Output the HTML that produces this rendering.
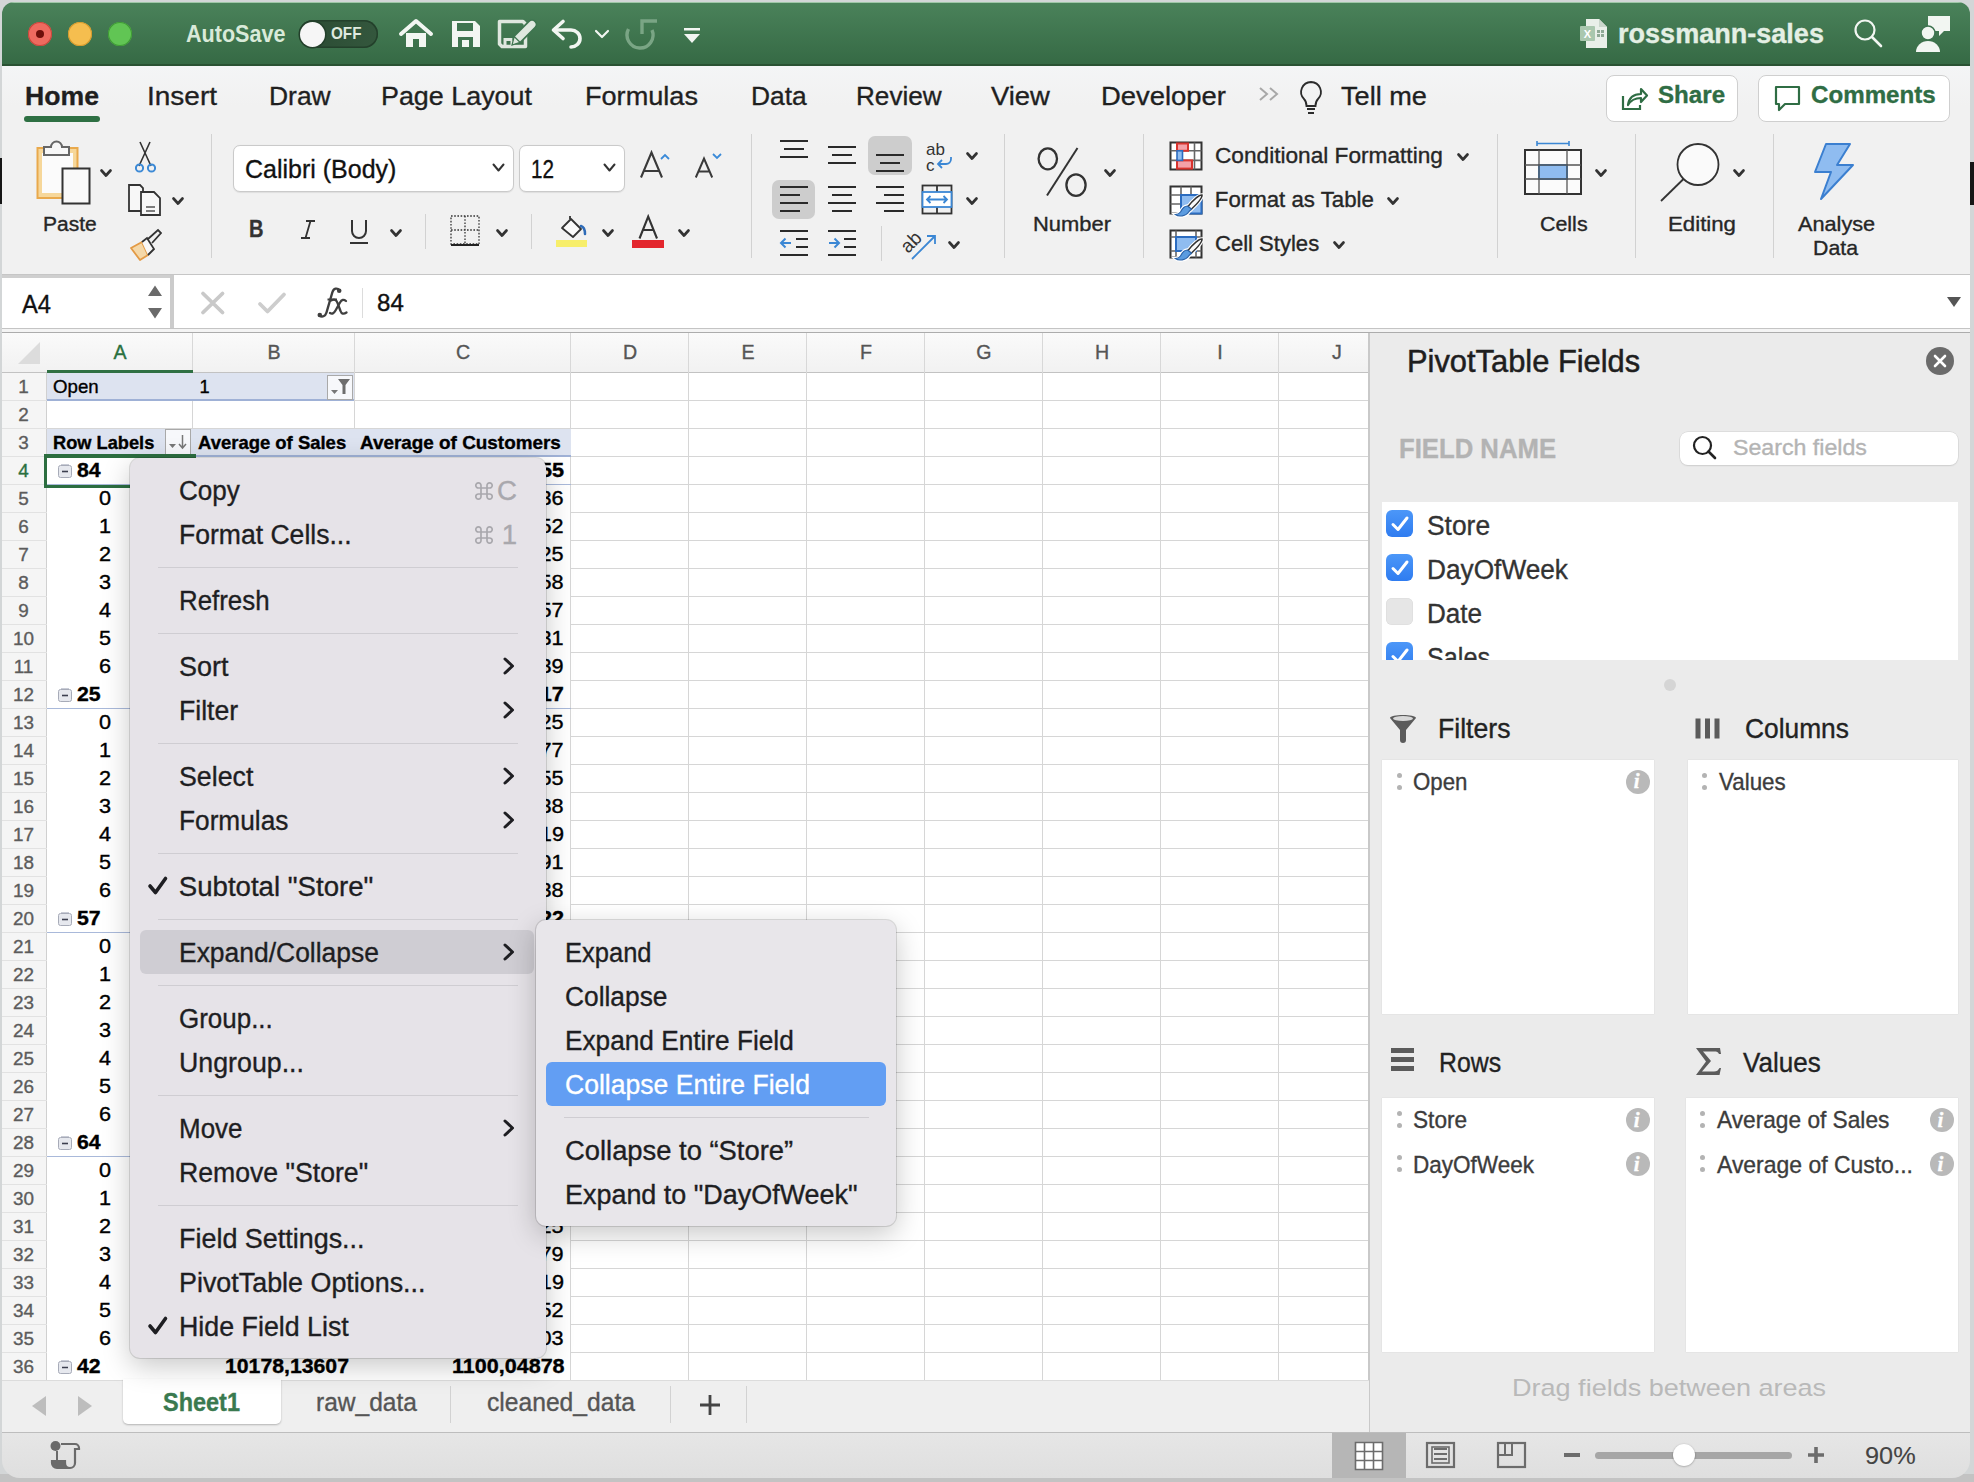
<!DOCTYPE html>
<html><head><meta charset="utf-8"><title>Excel</title><style>*{margin:0;padding:0;box-sizing:border-box}
html,body{width:1974px;height:1482px;overflow:hidden;background:#d3d6d7;font-family:"Liberation Sans",sans-serif}
.a{position:absolute}
.t{position:absolute;white-space:pre;line-height:1;transform-origin:0 0;-webkit-text-stroke:0.35px currentColor}
svg{overflow:visible}
</style></head><body>
<div class="a" style="left:0px;top:0px;width:1974px;height:1482px;background:#d3d6d7;"></div>
<div class="a" style="left:0px;top:1474px;width:1974px;height:8px;background:#c3c3c3;"></div>
<div class="a" style="left:0px;top:158px;width:3px;height:46px;background:#161616;"></div>
<div class="a" style="left:1968px;top:162px;width:6px;height:43px;background:#161616;"></div>
<div id="win" class="a" style="left:0;top:0;width:1974px;height:1482px;clip-path:inset(2px 4px 4px 2px round 12px 12px 18px 18px);">
<div class="a" style="left:0px;top:0px;width:1974px;height:66px;background:linear-gradient(#4b835b,#356944);"></div>
<div class="a" style="left:0px;top:2px;width:1974px;height:1px;background:#9fc7a8;"></div>
<div class="a" style="left:0px;top:64px;width:1974px;height:2px;background:#2a5233;"></div>
<div class="a" style="left:28px;top:22px;width:24px;height:24px;border-radius:50%;background:#ee6a5f;box-shadow:inset 0 0 0 1px #c9453b"></div>
<div class="a" style="left:68px;top:22px;width:24px;height:24px;border-radius:50%;background:#f5be4f;box-shadow:inset 0 0 0 1px #d69a2c"></div>
<div class="a" style="left:108px;top:22px;width:24px;height:24px;border-radius:50%;background:#61c554;box-shadow:inset 0 0 0 1px #3f9b35"></div>
<div class="a" style="left:36px;top:30px;width:8px;height:8px;border-radius:50%;background:#6e0f0a"></div>
<div class="t" style="left:186.00px;top:22.81px;font-size:23.26px;color:#d9ead9;font-weight:bold;transform:scaleX(0.9276);-webkit-text-stroke:0;">AutoSave</div>
<div class="a" style="left:299px;top:20px;width:79px;height:28px;border-radius:14px;background:linear-gradient(90deg,#2a4b33,#34573d);box-shadow:inset 0 0 0 1.5px #23402b"></div>
<div class="a" style="left:299.5px;top:21.5px;width:25px;height:25px;border-radius:50%;background:#f6f6f6;box-shadow:0 0 0 1.5px #23402b"></div>
<div class="t" style="left:330.50px;top:25.55px;font-size:16.72px;color:#dfeadf;font-weight:bold;transform:scaleX(0.9123);-webkit-text-stroke:0;">OFF</div>
<svg class="a" style="left:398px;top:18px;" width="36" height="32" viewBox="0 0 36 32"><path d="M3 16 L18 3 L33 16" fill="none" stroke="#f2f6f2" stroke-width="4" stroke-linejoin="round" stroke-linecap="round"/><path d="M8 15 V29 H15 V21 H21 V29 H28 V15" fill="#f2f6f2"/></svg>
<svg class="a" style="left:450px;top:19px;" width="32" height="30" viewBox="0 0 32 30"><path d="M2 2 H25 L30 7 V28 H2 Z" fill="#f2f6f2"/><rect x="7" y="4" width="16" height="8" fill="#3f7550"/><rect x="8" y="18" width="15" height="10" fill="#3f7550"/><rect x="12" y="21" width="7" height="7" fill="#f2f6f2"/></svg>
<svg class="a" style="left:496px;top:18px;" width="40" height="32" viewBox="0 0 40 32"><path d="M3.5 3.5 H27 L29.5 6 V28.5 H6 L3.5 26 Z" fill="none" stroke="#dfe7df" stroke-width="3.5" stroke-linejoin="round"/><path d="M9 29 V21.5 H16 V29" fill="none" stroke="#dfe7df" stroke-width="3"/><path d="M36 6.5 L21.5 21" stroke="#3f7550" stroke-width="10.5" stroke-linecap="round"/><path d="M36 6.5 L21.5 21" stroke="#dfe7df" stroke-width="7" stroke-linecap="round"/><path d="M18.2 18.5 L24 24.3 L16 27 Z" fill="#dfe7df" stroke="#3f7550" stroke-width="1.2"/></svg>
<svg class="a" style="left:550px;top:18px;" width="34" height="32" viewBox="0 0 34 32"><path d="M13 3.5 L3.5 12 L13 20.5" fill="none" stroke="#f2f6f2" stroke-width="3.6" stroke-linecap="round" stroke-linejoin="round"/><path d="M5 12 H21 A9 8.5 0 0 1 21 29" fill="none" stroke="#f2f6f2" stroke-width="3.6" stroke-linecap="round"/></svg>
<svg class="a" style="left:594px;top:29px;" width="16" height="11" viewBox="0 0 16 11"><path d="M2 2 L8 8 L14 2" fill="none" stroke="#f2f6f2" stroke-width="2.2" stroke-linecap="round" stroke-linejoin="round"/></svg>
<svg class="a" style="left:624px;top:17px;" width="36" height="33" viewBox="0 0 36 33"><path d="M4.5 12 A13 13 0 1 0 28 13" fill="none" stroke="#7aa585" stroke-width="3.4"/><path d="M18 17 V4 H33" fill="none" stroke="#7aa585" stroke-width="3.4" stroke-linejoin="miter"/></svg>
<svg class="a" style="left:682px;top:27px;" width="20" height="18" viewBox="0 0 20 18"><rect x="2" y="1" width="16" height="2.5" fill="#f2f6f2"/><path d="M2 7 H18 L10 16 Z" fill="#f2f6f2"/></svg>
<svg class="a" style="left:1579px;top:17px;" width="30" height="33" viewBox="0 0 30 33"><path d="M7 2 H20 L28 10 V31 H7 Z" fill="#e9efe9"/><path d="M20 2 V10 H28" fill="#c9d6cb"/><rect x="1" y="9" width="15" height="15" rx="1" fill="#a9c7ae"/><text x="8.5" y="21" font-size="11" font-family="Liberation Sans" font-weight="bold" fill="#fff" text-anchor="middle">X</text><rect x="18" y="13" width="3" height="3" fill="#8fa995"/><rect x="22" y="13" width="3" height="3" fill="#8fa995"/><rect x="18" y="17" width="3" height="3" fill="#8fa995"/><rect x="22" y="17" width="3" height="3" fill="#8fa995"/></svg>
<div class="t" style="left:1618.00px;top:20.32px;font-size:27.62px;color:#e4efe4;font-weight:bold;transform:scaleX(0.9796);">rossmann-sales</div>
<svg class="a" style="left:1850px;top:15px;" width="36" height="36" viewBox="0 0 36 36"><circle cx="15" cy="15" r="9.5" fill="none" stroke="#f2f6f2" stroke-width="2.2"/><path d="M22 22 L31 31" stroke="#f2f6f2" stroke-width="2.6" stroke-linecap="round"/></svg>
<svg class="a" style="left:1914px;top:14px;" width="38" height="40" viewBox="0 0 38 40"><path d="M14 2 H36 V17 H30 L25 22 V17 H14 Z" fill="#f2f6f2"/><circle cx="14" cy="19" r="7" fill="#f2f6f2" stroke="#3e7350" stroke-width="1.6"/><path d="M2 38 A12 11 0 0 1 26 38 Z" fill="#f2f6f2"/></svg>
<div class="a" style="left:0px;top:66px;width:1974px;height:209px;background:linear-gradient(#f4f5f6,#f1f1f1 40px,#f1f1f1);"></div>
<div class="a" style="left:0px;top:274px;width:1974px;height:1px;background:#c6c6c6;"></div>
<div class="t" style="left:25.00px;top:83.20px;font-size:26.45px;color:#1f1f1f;font-weight:bold;transform:scaleX(1.0072);">Home</div>
<div class="t" style="left:147.00px;top:83.20px;font-size:26.45px;color:#1f1f1f;transform:scaleX(1.0585);">Insert</div>
<div class="t" style="left:269.00px;top:83.20px;font-size:26.45px;color:#1f1f1f;">Draw</div>
<div class="t" style="left:381.00px;top:83.20px;font-size:26.45px;color:#1f1f1f;transform:scaleX(1.0166);">Page Layout</div>
<div class="t" style="left:585.00px;top:83.20px;font-size:26.45px;color:#1f1f1f;transform:scaleX(1.0250);">Formulas</div>
<div class="t" style="left:751.00px;top:83.20px;font-size:26.45px;color:#1f1f1f;transform:scaleX(0.9967);">Data</div>
<div class="t" style="left:855.70px;top:83.20px;font-size:26.45px;color:#1f1f1f;transform:scaleX(0.9881);">Review</div>
<div class="t" style="left:991.00px;top:83.20px;font-size:26.45px;color:#1f1f1f;transform:scaleX(1.0362);">View</div>
<div class="t" style="left:1101.00px;top:83.20px;font-size:26.45px;color:#1f1f1f;transform:scaleX(1.0368);">Developer</div>
<div class="t" style="left:1341.00px;top:83.20px;font-size:26.45px;color:#1f1f1f;transform:scaleX(1.0264);">Tell me</div>
<div class="a" style="left:24px;top:116px;width:76px;height:6px;background:#2e7043;border-radius:3px;"></div>
<svg class="a" style="left:1257px;top:86px;" width="26" height="18" viewBox="0 0 26 18"><path d="M3 2 L10 8 L3 14 M13 2 L20 8 L13 14" fill="none" stroke="#a8a8a8" stroke-width="2"/></svg>
<svg class="a" style="left:1298px;top:80px;" width="26" height="36" viewBox="0 0 26 36"><path d="M13 2 A10 10 0 0 1 20 19 C18 21 17.5 23 17.5 26 H8.5 C8.5 23 8 21 6 19 A10 10 0 0 1 13 2 Z" fill="none" stroke="#2b2b2b" stroke-width="1.8"/><path d="M9 29 H17 M10 33 H16" stroke="#2b2b2b" stroke-width="1.8"/></svg>
<div class="a" style="left:1605.5px;top:74.5px;width:132px;height:47px;border:1px solid #cfcfcf;border-radius:8px;background:#fff"></div>
<div class="a" style="left:1758px;top:74.5px;width:192px;height:47px;border:1px solid #cfcfcf;border-radius:8px;background:#fff"></div>
<svg class="a" style="left:1621px;top:84px;" width="28" height="28" viewBox="0 0 28 28"><path d="M2 12 V25 H19 V21" fill="none" stroke="#2f6d44" stroke-width="2.2"/><path d="M7 21 C8 13 13 10 20 10 V5 L26 11.5 L20 18 V14 C14 14 10 16 7 21 Z" fill="none" stroke="#2f6d44" stroke-width="2.2" stroke-linejoin="round"/></svg>
<div class="t" style="left:1657.50px;top:83.08px;font-size:24.71px;color:#2f6d44;font-weight:bold;transform:scaleX(0.9768);">Share</div>
<svg class="a" style="left:1774px;top:84px;" width="28" height="28" viewBox="0 0 28 28"><path d="M2 3 H25 V20 H11 L5 26 V20 H2 Z" fill="none" stroke="#2f6d44" stroke-width="2.2" stroke-linejoin="round"/></svg>
<div class="t" style="left:1810.60px;top:83.08px;font-size:24.71px;color:#2f6d44;font-weight:bold;transform:scaleX(0.9774);">Comments</div>
<svg class="a" style="left:34px;top:142px;" width="60" height="64" viewBox="0 0 60 64"><rect x="3.5" y="6" width="40" height="50" fill="#f6d79a" stroke="#e9a94c" stroke-width="2"/><rect x="8" y="11" width="31" height="40" fill="#fbfbfb"/><path d="M10 13 H35 V5 H28 A5 5 0 0 0 17 5 H10 Z" fill="#f7f7f7" stroke="#666" stroke-width="2"/><rect x="28.5" y="26.5" width="27" height="35" fill="#f9f9f9" stroke="#333" stroke-width="2"/></svg>
<svg class="a" style="left:100px;top:169px;" width="12" height="8" viewBox="0 0 12 8"><path d="M1.5 1.5 L6.0 6.5 L10.5 1.5" fill="none" stroke="#333" stroke-width="2.7" stroke-linecap="round" stroke-linejoin="round"/></svg>
<div class="t" style="left:43.00px;top:214.27px;font-size:20.35px;color:#262626;transform:scaleX(1.0319);">Paste</div>
<svg class="a" style="left:132px;top:140px;" width="26" height="34" viewBox="0 0 26 34"><path d="M8 2 L19 26 M18 2 L7 26" stroke="#333" stroke-width="1.6"/><circle cx="7.5" cy="28" r="3.6" fill="none" stroke="#3d8ad6" stroke-width="2"/><circle cx="19.5" cy="28" r="3.6" fill="none" stroke="#3d8ad6" stroke-width="2"/></svg>
<svg class="a" style="left:127px;top:183px;" width="36" height="34" viewBox="0 0 36 34"><path d="M2 2 H13 L16 5 V28 H2 Z" fill="#f7f7f7" stroke="#333" stroke-width="1.8"/><path d="M14 9 H27 L33 15 V32 H14 Z" fill="#f7f7f7" stroke="#333" stroke-width="1.8"/><path d="M19 24 H28 M19 28 H28" stroke="#555" stroke-width="1.6"/></svg>
<svg class="a" style="left:172px;top:197px;" width="12" height="8" viewBox="0 0 12 8"><path d="M1.5 1.5 L6.0 6.5 L10.5 1.5" fill="none" stroke="#333" stroke-width="2.7" stroke-linecap="round" stroke-linejoin="round"/></svg>
<svg class="a" style="left:128px;top:227px;" width="34" height="34" viewBox="0 0 34 34"><path d="M3 21 L14 15 L20 28 L12 33 Z" fill="#f5d8a8" stroke="#e39a45" stroke-width="1.8" stroke-linejoin="round"/><path d="M14 15 L19 11 L26 22 L20 28" fill="#f8f8f8" stroke="#333" stroke-width="1.8"/><path d="M20 12 L30 3 L33 6 L24 16" fill="none" stroke="#333" stroke-width="1.8"/></svg>
<div class="a" style="left:211px;top:134px;width:1px;height:124px;background:#d2d2d2;"></div>
<div class="a" style="left:232.5px;top:144.5px;width:281px;height:47px;border:1px solid #cacaca;border-radius:7px;background:#fff;box-shadow:0 0.5px 1px rgba(0,0,0,.08)"></div>
<div class="a" style="left:519px;top:144.5px;width:106px;height:47px;border:1px solid #cacaca;border-radius:7px;background:#fff;box-shadow:0 0.5px 1px rgba(0,0,0,.08)"></div>
<div class="t" style="left:245.00px;top:156.30px;font-size:26.45px;color:#111;transform:scaleX(0.9454);">Calibri (Body)</div>
<svg class="a" style="left:492px;top:163px;" width="13" height="9" viewBox="0 0 13 9"><path d="M1.5 1.5 L6.5 7.5 L11.5 1.5" fill="none" stroke="#333" stroke-width="2" stroke-linecap="round" stroke-linejoin="round"/></svg>
<div class="t" style="left:531.00px;top:156.30px;font-size:26.45px;color:#111;transform:scaleX(0.7815);">12</div>
<svg class="a" style="left:603px;top:163px;" width="13" height="9" viewBox="0 0 13 9"><path d="M1.5 1.5 L6.5 7.5 L11.5 1.5" fill="none" stroke="#333" stroke-width="2" stroke-linecap="round" stroke-linejoin="round"/></svg>
<svg class="a" style="left:0px;top:0px;" width="1" height="1" viewBox="0 0 1 1"><path d="M641 177.5 L651.5 152.5 L662 177.5 M643.7 171 H659.3" fill="none" stroke="#3a3a3a" stroke-width="2.1"/></svg>
<svg class="a" style="left:659px;top:152.5px;" width="12" height="8" viewBox="0 0 12 8"><path d="M2 6 L6 2 L10 6" fill="none" stroke="#3a8ad8" stroke-width="1.8"/></svg>
<svg class="a" style="left:0px;top:0px;" width="1" height="1" viewBox="0 0 1 1"><path d="M695.8 177.5 L704 158.5 L712.2 177.5 M698.1 171.5 H709.7" fill="none" stroke="#3a3a3a" stroke-width="2"/></svg>
<svg class="a" style="left:711px;top:152px;" width="12" height="8" viewBox="0 0 12 8"><path d="M2 2 L6 6 L10 2" fill="none" stroke="#3a8ad8" stroke-width="1.8"/></svg>
<div class="t" style="left:249.00px;top:217.08px;font-size:24.71px;color:#333;font-weight:bold;transform:scaleX(0.8122);">B</div>
<svg class="a" style="left:298px;top:219px;" width="20" height="22" viewBox="0 0 20 22"><path d="M8 2 H17 M3 19 H12 M12.5 2 L7.5 19" stroke="#333" stroke-width="1.8"/></svg>
<svg class="a" style="left:348px;top:218px;" width="22" height="28" viewBox="0 0 22 28"><path d="M4 2 V13 A7 7 0 0 0 18 13 V2" fill="none" stroke="#333" stroke-width="2"/><path d="M2 25 H20" stroke="#333" stroke-width="2"/></svg>
<svg class="a" style="left:390px;top:229px;" width="12" height="8" viewBox="0 0 12 8"><path d="M1.5 1.5 L6.0 6.5 L10.5 1.5" fill="none" stroke="#333" stroke-width="2.7" stroke-linecap="round" stroke-linejoin="round"/></svg>
<div class="a" style="left:425px;top:214px;width:1px;height:35px;background:#d2d2d2;"></div>
<svg class="a" style="left:449px;top:214px;" width="32" height="33" viewBox="0 0 32 33"><rect x="2" y="2" width="28" height="28" fill="none" stroke="#333" stroke-width="1.3" stroke-dasharray="1.6 1.6"/><path d="M16 2 V30 M2 16 H30" stroke="#333" stroke-width="1.3" stroke-dasharray="1.6 1.6"/><path d="M2 31 H30" stroke="#222" stroke-width="2.2"/></svg>
<svg class="a" style="left:496px;top:229px;" width="12" height="8" viewBox="0 0 12 8"><path d="M1.5 1.5 L6.0 6.5 L10.5 1.5" fill="none" stroke="#333" stroke-width="2.7" stroke-linecap="round" stroke-linejoin="round"/></svg>
<div class="a" style="left:531px;top:214px;width:1px;height:35px;background:#d2d2d2;"></div>
<div class="a" style="left:556px;top:240px;width:31px;height:7px;background:#f7ee6a;"></div>
<svg class="a" style="left:556px;top:214px;" width="34" height="28" viewBox="0 0 34 28"><path d="M6 14 L15 5 L25 15 L17 23 Z" fill="#fafafa" stroke="#333" stroke-width="1.8" stroke-linejoin="round"/><path d="M14 5 V2" stroke="#333" stroke-width="1.8"/><path d="M25 12 C28 13 29 16 29 20" fill="none" stroke="#2e6bb8" stroke-width="2.5" stroke-linecap="round"/></svg>
<svg class="a" style="left:602px;top:229px;" width="12" height="8" viewBox="0 0 12 8"><path d="M1.5 1.5 L6.0 6.5 L10.5 1.5" fill="none" stroke="#333" stroke-width="2.7" stroke-linecap="round" stroke-linejoin="round"/></svg>
<div class="a" style="left:632px;top:240px;width:32px;height:8px;background:#e3262d;"></div>
<svg class="a" style="left:0px;top:0px;" width="1" height="1" viewBox="0 0 1 1"><path d="M639.5 238.5 L648.2 216.5 L657 238.5 M642.7 230 H653.7" fill="none" stroke="#333" stroke-width="2.1"/></svg>
<svg class="a" style="left:678px;top:229px;" width="12" height="8" viewBox="0 0 12 8"><path d="M1.5 1.5 L6.0 6.5 L10.5 1.5" fill="none" stroke="#333" stroke-width="2.7" stroke-linecap="round" stroke-linejoin="round"/></svg>
<div class="a" style="left:751px;top:134px;width:1px;height:124px;background:#d2d2d2;"></div>
<div class="a" style="left:780px;top:139.6px;width:28px;height:2.2px;background:#2a2a2a;"></div>
<div class="a" style="left:784px;top:147.8px;width:20px;height:2.2px;background:#2a2a2a;"></div>
<div class="a" style="left:780px;top:156px;width:28px;height:2.2px;background:#2a2a2a;"></div>
<div class="a" style="left:828px;top:146px;width:28px;height:2.2px;background:#2a2a2a;"></div>
<div class="a" style="left:832px;top:153.8px;width:20px;height:2.2px;background:#2a2a2a;"></div>
<div class="a" style="left:828px;top:162px;width:28px;height:2.2px;background:#2a2a2a;"></div>
<div class="a" style="left:868px;top:136px;width:44px;height:39px;background:#cdcdcd;border-radius:7px;"></div>
<div class="a" style="left:876px;top:153.8px;width:28px;height:2.2px;background:#2a2a2a;"></div>
<div class="a" style="left:880px;top:162px;width:20px;height:2.2px;background:#2a2a2a;"></div>
<div class="a" style="left:876px;top:169.7px;width:28px;height:2.2px;background:#2a2a2a;"></div>
<div class="a" style="left:772px;top:180px;width:43px;height:39px;background:#cdcdcd;border-radius:7px;"></div>
<div class="a" style="left:780px;top:185.7px;width:28px;height:2.2px;background:#2a2a2a;"></div>
<div class="a" style="left:780px;top:193.8px;width:20px;height:2.2px;background:#2a2a2a;"></div>
<div class="a" style="left:780px;top:201.7px;width:28px;height:2.2px;background:#2a2a2a;"></div>
<div class="a" style="left:780px;top:209.8px;width:20px;height:2.2px;background:#2a2a2a;"></div>
<div class="a" style="left:828px;top:185.7px;width:28px;height:2.2px;background:#2a2a2a;"></div>
<div class="a" style="left:832px;top:193.8px;width:20px;height:2.2px;background:#2a2a2a;"></div>
<div class="a" style="left:828px;top:201.7px;width:28px;height:2.2px;background:#2a2a2a;"></div>
<div class="a" style="left:832px;top:209.8px;width:20px;height:2.2px;background:#2a2a2a;"></div>
<div class="a" style="left:876px;top:185.7px;width:28px;height:2.2px;background:#2a2a2a;"></div>
<div class="a" style="left:884px;top:193.8px;width:20px;height:2.2px;background:#2a2a2a;"></div>
<div class="a" style="left:876px;top:201.7px;width:28px;height:2.2px;background:#2a2a2a;"></div>
<div class="a" style="left:884px;top:209.8px;width:20px;height:2.2px;background:#2a2a2a;"></div>
<div class="a" style="left:780px;top:229.7px;width:28px;height:2.2px;background:#2a2a2a;"></div>
<div class="a" style="left:796px;top:237.8px;width:12px;height:2.2px;background:#2a2a2a;"></div>
<div class="a" style="left:796px;top:245.7px;width:12px;height:2.2px;background:#2a2a2a;"></div>
<div class="a" style="left:780px;top:253.8px;width:28px;height:2.2px;background:#2a2a2a;"></div>
<div class="a" style="left:828px;top:229.7px;width:28px;height:2.2px;background:#2a2a2a;"></div>
<div class="a" style="left:844px;top:237.8px;width:12px;height:2.2px;background:#2a2a2a;"></div>
<div class="a" style="left:844px;top:245.7px;width:12px;height:2.2px;background:#2a2a2a;"></div>
<div class="a" style="left:828px;top:253.8px;width:28px;height:2.2px;background:#2a2a2a;"></div>
<svg class="a" style="left:779px;top:236px;" width="14" height="14" viewBox="0 0 14 14"><path d="M12 7 H2 M6.5 2.5 L2 7 L6.5 11.5" fill="none" stroke="#3b87d4" stroke-width="2"/></svg>
<svg class="a" style="left:827px;top:236px;" width="14" height="14" viewBox="0 0 14 14"><path d="M2 7 H12 M7.5 2.5 L12 7 L7.5 11.5" fill="none" stroke="#3b87d4" stroke-width="2"/></svg>
<svg class="a" style="left:924px;top:140px;" width="34" height="34" viewBox="0 0 34 34"><text x="2" y="15" font-size="17" font-family="Liberation Sans" fill="#333">ab</text><text x="2" y="31" font-size="17" font-family="Liberation Sans" fill="#333">c</text><path d="M14 24 H22 A5 5 0 0 0 27 19 V17" fill="none" stroke="#3b87d4" stroke-width="1.8"/><path d="M18 20 L14 24 L18 28" fill="none" stroke="#3b87d4" stroke-width="1.8"/></svg>
<svg class="a" style="left:966px;top:152px;" width="12" height="8" viewBox="0 0 12 8"><path d="M1.5 1.5 L6.0 6.5 L10.5 1.5" fill="none" stroke="#333" stroke-width="2.7" stroke-linecap="round" stroke-linejoin="round"/></svg>
<svg class="a" style="left:921px;top:184px;" width="32" height="31" viewBox="0 0 32 31"><rect x="1.5" y="1.5" width="29" height="28" fill="none" stroke="#333" stroke-width="1.8"/><path d="M16 1.5 V8 M16 23 V29.5" stroke="#333" stroke-width="1.8"/><rect x="1.5" y="8" width="29" height="15" fill="#fff" stroke="#3b87d4" stroke-width="1.8"/><path d="M6 15.5 H26 M9.5 12 L6 15.5 L9.5 19 M22.5 12 L26 15.5 L22.5 19" fill="none" stroke="#3b87d4" stroke-width="1.8"/></svg>
<svg class="a" style="left:966px;top:197px;" width="12" height="8" viewBox="0 0 12 8"><path d="M1.5 1.5 L6.0 6.5 L10.5 1.5" fill="none" stroke="#333" stroke-width="2.7" stroke-linecap="round" stroke-linejoin="round"/></svg>
<div class="a" style="left:881px;top:226px;width:1px;height:35px;background:#d2d2d2;"></div>
<svg class="a" style="left:902px;top:227px;" width="38" height="34" viewBox="0 0 38 34"><text x="0" y="0" font-size="19" font-family="Liberation Sans" fill="#333" transform="translate(6 27) rotate(-45)">ab</text><path d="M10 32 L33 9 M25 9 H33 V17" fill="none" stroke="#3b87d4" stroke-width="1.8"/></svg>
<svg class="a" style="left:948px;top:241px;" width="12" height="8" viewBox="0 0 12 8"><path d="M1.5 1.5 L6.0 6.5 L10.5 1.5" fill="none" stroke="#333" stroke-width="2.7" stroke-linecap="round" stroke-linejoin="round"/></svg>
<div class="a" style="left:1004px;top:134px;width:1px;height:124px;background:#d2d2d2;"></div>
<svg class="a" style="left:1036px;top:146px;" width="52" height="52" viewBox="0 0 52 52"><ellipse cx="11.8" cy="12.8" rx="9.2" ry="10.5" fill="none" stroke="#333" stroke-width="2.3"/><ellipse cx="40" cy="39.1" rx="9.6" ry="10.7" fill="none" stroke="#333" stroke-width="2.3"/><path d="M41.5 2 L11 49.5" stroke="#333" stroke-width="2"/></svg>
<svg class="a" style="left:1104px;top:169px;" width="12" height="8" viewBox="0 0 12 8"><path d="M1.5 1.5 L6.0 6.5 L10.5 1.5" fill="none" stroke="#333" stroke-width="2.7" stroke-linecap="round" stroke-linejoin="round"/></svg>
<div class="t" style="left:1033.00px;top:214.18px;font-size:20.93px;color:#262626;transform:scaleX(1.0476);">Number</div>
<div class="a" style="left:1143px;top:134px;width:1px;height:124px;background:#d2d2d2;"></div>
<svg class="a" style="left:1169px;top:141px;" width="34" height="30" viewBox="0 0 34 30"><rect x="1.5" y="1.5" width="31" height="27" fill="#fff" stroke="#333" stroke-width="2"/><path d="M25.5 1.5 V28.5 M1.5 9.8 H32.5 M1.5 19.4 H32.5" stroke="#666" stroke-width="1.6"/><rect x="8" y="2.5" width="11" height="7.3" fill="#f4a0a8" stroke="#d8342f" stroke-width="2"/><rect x="8" y="19.4" width="15" height="8.2" fill="#f4a0a8" stroke="#d8342f" stroke-width="2"/><rect x="8" y="9.8" width="5.5" height="9.6" fill="#8fbcf0" stroke="#2b6cc0" stroke-width="1.6"/></svg>
<div class="t" style="left:1214.80px;top:145.47px;font-size:22.24px;color:#262626;transform:scaleX(1.0187);">Conditional Formatting</div>
<svg class="a" style="left:1457px;top:153px;" width="12" height="8" viewBox="0 0 12 8"><path d="M1.5 1.5 L6.0 6.5 L10.5 1.5" fill="none" stroke="#333" stroke-width="2.7" stroke-linecap="round" stroke-linejoin="round"/></svg>
<svg class="a" style="left:1169px;top:185px;" width="36" height="32" viewBox="0 0 36 32"><rect x="1.5" y="1.5" width="31" height="27" fill="#fff" stroke="#333" stroke-width="2"/><path d="M12 1.5 V28.5 M22 1.5 V28.5 M1.5 10 H32.5 M1.5 19 H32.5" stroke="#666" stroke-width="1.6"/><rect x="12" y="10" width="20.5" height="18.5" fill="#8fbcf0" stroke="#2b6cc0" stroke-width="2"/><path d="M33 10 C30.5 9.5 24 15 19 21.5 L22 24.5 C28 19 33.5 12.5 33 10 Z" fill="#fff" stroke="#fff" stroke-width="3.5"/><path d="M18.5 21 C14.5 21 13 24 11.5 27 C10 29 8 29.5 6.5 29.5 C9.5 32 17 31.5 20 26.5 L22.5 24 Z" fill="#fff" stroke="#fff" stroke-width="3.5"/><path d="M33 10 C30.5 9.5 24 15 19 21.5 L22 24.5 C28 19 33.5 12.5 33 10 Z" fill="#fafafa" stroke="#333" stroke-width="1.5"/><path d="M18.5 21 C14.5 21 13 24 11.5 27 C10 29 8 29.5 6.5 29.5 C9.5 32 17 31.5 20 26.5 L22.5 24 Z" fill="#5a9be0" stroke="#2a62a8" stroke-width="1.2"/></svg>
<div class="t" style="left:1214.80px;top:189.17px;font-size:22.24px;color:#262626;">Format as Table</div>
<svg class="a" style="left:1387px;top:197px;" width="12" height="8" viewBox="0 0 12 8"><path d="M1.5 1.5 L6.0 6.5 L10.5 1.5" fill="none" stroke="#333" stroke-width="2.7" stroke-linecap="round" stroke-linejoin="round"/></svg>
<svg class="a" style="left:1169px;top:229px;" width="36" height="32" viewBox="0 0 36 32"><rect x="1.5" y="1.5" width="31" height="27" fill="#fff" stroke="#333" stroke-width="2"/><path d="M7 1.5 V28.5 M27 1.5 V28.5 M1.5 8 H32.5 M1.5 22 H32.5" stroke="#666" stroke-width="1.6"/><rect x="7" y="8" width="20" height="14" fill="#8fbcf0" stroke="#2b6cc0" stroke-width="2"/><path d="M33 10 C30.5 9.5 24 15 19 21.5 L22 24.5 C28 19 33.5 12.5 33 10 Z" fill="#fff" stroke="#fff" stroke-width="3.5"/><path d="M18.5 21 C14.5 21 13 24 11.5 27 C10 29 8 29.5 6.5 29.5 C9.5 32 17 31.5 20 26.5 L22.5 24 Z" fill="#fff" stroke="#fff" stroke-width="3.5"/><path d="M33 10 C30.5 9.5 24 15 19 21.5 L22 24.5 C28 19 33.5 12.5 33 10 Z" fill="#fafafa" stroke="#333" stroke-width="1.5"/><path d="M18.5 21 C14.5 21 13 24 11.5 27 C10 29 8 29.5 6.5 29.5 C9.5 32 17 31.5 20 26.5 L22.5 24 Z" fill="#5a9be0" stroke="#2a62a8" stroke-width="1.2"/></svg>
<div class="t" style="left:1214.80px;top:232.77px;font-size:22.24px;color:#262626;transform:scaleX(0.9917);">Cell Styles</div>
<svg class="a" style="left:1333px;top:241px;" width="12" height="8" viewBox="0 0 12 8"><path d="M1.5 1.5 L6.0 6.5 L10.5 1.5" fill="none" stroke="#333" stroke-width="2.7" stroke-linecap="round" stroke-linejoin="round"/></svg>
<div class="a" style="left:1497px;top:134px;width:1px;height:124px;background:#d2d2d2;"></div>
<svg class="a" style="left:1523px;top:141px;" width="60" height="54" viewBox="0 0 60 54"><path d="M14 2.5 H46 M14 0 V5 M46 0 V5" stroke="#3b87d4" stroke-width="1.6"/><rect x="2" y="9" width="56" height="44" fill="#fbfbfb" stroke="#333" stroke-width="2"/><rect x="16" y="24" width="28" height="14" fill="#8fbcf0" stroke="#3b87d4" stroke-width="2"/><path d="M16 9 V53 M44 9 V53 M2 24 H58 M2 38 H58" stroke="#555" stroke-width="1.3"/></svg>
<svg class="a" style="left:1595px;top:169px;" width="12" height="8" viewBox="0 0 12 8"><path d="M1.5 1.5 L6.0 6.5 L10.5 1.5" fill="none" stroke="#333" stroke-width="2.7" stroke-linecap="round" stroke-linejoin="round"/></svg>
<div class="t" style="left:1540.00px;top:214.18px;font-size:20.93px;color:#262626;transform:scaleX(1.0233);">Cells</div>
<div class="a" style="left:1635px;top:134px;width:1px;height:124px;background:#d2d2d2;"></div>
<svg class="a" style="left:1658px;top:141px;" width="66" height="64" viewBox="0 0 66 64"><circle cx="40" cy="23.5" r="20.5" fill="#fafafa" stroke="#333" stroke-width="1.8"/><path d="M25.5 38 L3 60" stroke="#333" stroke-width="1.8"/></svg>
<svg class="a" style="left:1733px;top:169px;" width="12" height="8" viewBox="0 0 12 8"><path d="M1.5 1.5 L6.0 6.5 L10.5 1.5" fill="none" stroke="#333" stroke-width="2.7" stroke-linecap="round" stroke-linejoin="round"/></svg>
<div class="t" style="left:1667.70px;top:214.18px;font-size:20.93px;color:#262626;transform:scaleX(1.0626);">Editing</div>
<div class="a" style="left:1773px;top:134px;width:1px;height:124px;background:#d2d2d2;"></div>
<svg class="a" style="left:1810px;top:141px;" width="50" height="62" viewBox="0 0 50 62"><path d="M16 3 H40 L27 24 H43 L11 58 L21 31 H5 Z" fill="#8fbcf0" stroke="#3b7fd0" stroke-width="2" stroke-linejoin="round"/></svg>
<div class="t" style="left:1797.80px;top:214.18px;font-size:20.93px;color:#262626;transform:scaleX(1.0368);">Analyse</div>
<div class="t" style="left:1813.00px;top:237.78px;font-size:20.93px;color:#262626;transform:scaleX(1.0178);">Data</div>
<div class="a" style="left:0px;top:275px;width:1974px;height:58px;background:#fff;"></div>
<div class="a" style="left:0px;top:275px;width:172px;height:3px;background:#cfcfcf;"></div>
<div class="a" style="left:170px;top:275px;width:4px;height:53px;background:#cbcbcb;"></div>
<div class="a" style="left:0px;top:328px;width:1974px;height:1px;background:#c4c4c4;"></div>
<div class="a" style="left:0px;top:329px;width:1974px;height:3px;background:#f4f4f4;"></div>
<div class="a" style="left:0px;top:332px;width:1974px;height:1px;background:#acacac;"></div>
<div class="t" style="left:22.00px;top:291.94px;font-size:25.58px;color:#111;transform:scaleX(0.9273);">A4</div>
<svg class="a" style="left:146px;top:284px;" width="18" height="36" viewBox="0 0 18 36"><path d="M2 12 L9 1.5 L16 12 Z M2 24 L9 34.5 L16 24 Z" fill="#6a6a6a"/></svg>
<svg class="a" style="left:200px;top:291px;" width="26" height="24" viewBox="0 0 26 24"><path d="M3 2.5 L22.5 21.5 M22.5 2.5 L3 21.5" stroke="#c9c9c9" stroke-width="3.8" stroke-linecap="round"/></svg>
<svg class="a" style="left:257px;top:291px;" width="30" height="24" viewBox="0 0 30 24"><path d="M3 13 L10.5 20.5 L27 3.5" fill="none" stroke="#cdcdcd" stroke-width="3.8" stroke-linecap="round" stroke-linejoin="round"/></svg>
<svg class="a" style="left:316px;top:286px;" width="34" height="34" viewBox="0 0 34 34"><path d="M23.5 4.5 C21.5 1.5 17.5 2 16.3 6.5 L10.5 26.5 C9.3 30.5 6 31.5 3.5 29.5" fill="none" stroke="#3f3f3f" stroke-width="2.4" stroke-linecap="round"/><circle cx="23.2" cy="4.8" r="2.3" fill="#3f3f3f"/><circle cx="3.8" cy="29" r="2.3" fill="#3f3f3f"/><path d="M11.5 13.5 H21" stroke="#3f3f3f" stroke-width="2"/><path d="M15 14.5 Q20 12 21.5 17 L24.5 25 Q26 29.5 30.5 26.5" fill="none" stroke="#3f3f3f" stroke-width="2.3" stroke-linecap="round"/><path d="M30 15 Q26.5 12 24 16.5 L19.5 24.5 Q17 29 14 27" fill="none" stroke="#3f3f3f" stroke-width="2.3" stroke-linecap="round"/></svg>
<div class="a" style="left:362px;top:288px;width:1px;height:30px;background:#dcdcdc;"></div>
<div class="t" style="left:376.70px;top:290.88px;font-size:24.71px;color:#111;transform:scaleX(0.9749);">84</div>
<svg class="a" style="left:1946px;top:296px;" width="16" height="12" viewBox="0 0 16 12"><path d="M1 1 H15 L8 11 Z" fill="#555"/></svg>
<div class="a" style="left:0px;top:333px;width:1369px;height:1047px;background:#fff;"></div>
<div class="a" style="left:0px;top:333px;width:1369px;height:40px;background:linear-gradient(#fafafa,#f1f1f1);"></div>
<div class="a" style="left:0px;top:371.5px;width:1369px;height:1.8px;background:#c2c2c2;"></div>
<svg class="a" style="left:16px;top:340px;" width="26" height="26" viewBox="0 0 26 26"><path d="M24 2 V24 H2 Z" fill="#dcdcdc"/></svg>
<div class="a" style="left:192px;top:333px;width:1px;height:40px;background:#d8d8d8;"></div>
<div class="t" style="left:113.45px;top:343.39px;font-size:19.62px;color:#2a7040;">A</div>
<div class="a" style="left:354px;top:333px;width:1px;height:40px;background:#d8d8d8;"></div>
<div class="t" style="left:267.45px;top:343.39px;font-size:19.62px;color:#555;">B</div>
<div class="a" style="left:570px;top:333px;width:1px;height:40px;background:#d8d8d8;"></div>
<div class="t" style="left:455.91px;top:343.39px;font-size:19.62px;color:#555;">C</div>
<div class="a" style="left:688px;top:333px;width:1px;height:40px;background:#d8d8d8;"></div>
<div class="t" style="left:622.91px;top:343.39px;font-size:19.62px;color:#555;">D</div>
<div class="a" style="left:806px;top:333px;width:1px;height:40px;background:#d8d8d8;"></div>
<div class="t" style="left:741.45px;top:343.39px;font-size:19.62px;color:#555;">E</div>
<div class="a" style="left:924px;top:333px;width:1px;height:40px;background:#d8d8d8;"></div>
<div class="t" style="left:860.02px;top:343.39px;font-size:19.62px;color:#555;">F</div>
<div class="a" style="left:1042px;top:333px;width:1px;height:40px;background:#d8d8d8;"></div>
<div class="t" style="left:976.37px;top:343.39px;font-size:19.62px;color:#555;">G</div>
<div class="a" style="left:1160px;top:333px;width:1px;height:40px;background:#d8d8d8;"></div>
<div class="t" style="left:1094.91px;top:343.39px;font-size:19.62px;color:#555;">H</div>
<div class="a" style="left:1278px;top:333px;width:1px;height:40px;background:#d8d8d8;"></div>
<div class="t" style="left:1217.28px;top:343.39px;font-size:19.62px;color:#555;">I</div>
<div class="a" style="left:1368px;top:333px;width:1px;height:40px;background:#d8d8d8;"></div>
<div class="t" style="left:1332.09px;top:343.39px;font-size:19.62px;color:#555;">J</div>
<div class="a" style="left:47px;top:370px;width:146px;height:3.5px;background:#2f7043;"></div>
<div class="a" style="left:0px;top:373px;width:47px;height:1007px;background:#f5f5f5;"></div>
<div class="a" style="left:46px;top:373px;width:1px;height:1007px;background:#d0d0d0;"></div>
<div class="a" style="left:47px;top:400px;width:1322px;height:1.2px;background:#d6d6d6;"></div>
<div class="a" style="left:0px;top:400px;width:47px;height:1px;background:#e2e2e2;"></div>
<div class="a" style="left:47px;top:428px;width:1322px;height:1.2px;background:#d6d6d6;"></div>
<div class="a" style="left:0px;top:428px;width:47px;height:1px;background:#e2e2e2;"></div>
<div class="a" style="left:47px;top:456px;width:1322px;height:1.2px;background:#d6d6d6;"></div>
<div class="a" style="left:0px;top:456px;width:47px;height:1px;background:#e2e2e2;"></div>
<div class="a" style="left:47px;top:484px;width:1322px;height:1.2px;background:#d6d6d6;"></div>
<div class="a" style="left:0px;top:484px;width:47px;height:1px;background:#e2e2e2;"></div>
<div class="a" style="left:47px;top:512px;width:1322px;height:1.2px;background:#d6d6d6;"></div>
<div class="a" style="left:0px;top:512px;width:47px;height:1px;background:#e2e2e2;"></div>
<div class="a" style="left:47px;top:540px;width:1322px;height:1.2px;background:#d6d6d6;"></div>
<div class="a" style="left:0px;top:540px;width:47px;height:1px;background:#e2e2e2;"></div>
<div class="a" style="left:47px;top:568px;width:1322px;height:1.2px;background:#d6d6d6;"></div>
<div class="a" style="left:0px;top:568px;width:47px;height:1px;background:#e2e2e2;"></div>
<div class="a" style="left:47px;top:596px;width:1322px;height:1.2px;background:#d6d6d6;"></div>
<div class="a" style="left:0px;top:596px;width:47px;height:1px;background:#e2e2e2;"></div>
<div class="a" style="left:47px;top:624px;width:1322px;height:1.2px;background:#d6d6d6;"></div>
<div class="a" style="left:0px;top:624px;width:47px;height:1px;background:#e2e2e2;"></div>
<div class="a" style="left:47px;top:652px;width:1322px;height:1.2px;background:#d6d6d6;"></div>
<div class="a" style="left:0px;top:652px;width:47px;height:1px;background:#e2e2e2;"></div>
<div class="a" style="left:47px;top:680px;width:1322px;height:1.2px;background:#d6d6d6;"></div>
<div class="a" style="left:0px;top:680px;width:47px;height:1px;background:#e2e2e2;"></div>
<div class="a" style="left:47px;top:708px;width:1322px;height:1.2px;background:#d6d6d6;"></div>
<div class="a" style="left:0px;top:708px;width:47px;height:1px;background:#e2e2e2;"></div>
<div class="a" style="left:47px;top:736px;width:1322px;height:1.2px;background:#d6d6d6;"></div>
<div class="a" style="left:0px;top:736px;width:47px;height:1px;background:#e2e2e2;"></div>
<div class="a" style="left:47px;top:764px;width:1322px;height:1.2px;background:#d6d6d6;"></div>
<div class="a" style="left:0px;top:764px;width:47px;height:1px;background:#e2e2e2;"></div>
<div class="a" style="left:47px;top:792px;width:1322px;height:1.2px;background:#d6d6d6;"></div>
<div class="a" style="left:0px;top:792px;width:47px;height:1px;background:#e2e2e2;"></div>
<div class="a" style="left:47px;top:820px;width:1322px;height:1.2px;background:#d6d6d6;"></div>
<div class="a" style="left:0px;top:820px;width:47px;height:1px;background:#e2e2e2;"></div>
<div class="a" style="left:47px;top:848px;width:1322px;height:1.2px;background:#d6d6d6;"></div>
<div class="a" style="left:0px;top:848px;width:47px;height:1px;background:#e2e2e2;"></div>
<div class="a" style="left:47px;top:876px;width:1322px;height:1.2px;background:#d6d6d6;"></div>
<div class="a" style="left:0px;top:876px;width:47px;height:1px;background:#e2e2e2;"></div>
<div class="a" style="left:47px;top:904px;width:1322px;height:1.2px;background:#d6d6d6;"></div>
<div class="a" style="left:0px;top:904px;width:47px;height:1px;background:#e2e2e2;"></div>
<div class="a" style="left:47px;top:932px;width:1322px;height:1.2px;background:#d6d6d6;"></div>
<div class="a" style="left:0px;top:932px;width:47px;height:1px;background:#e2e2e2;"></div>
<div class="a" style="left:47px;top:960px;width:1322px;height:1.2px;background:#d6d6d6;"></div>
<div class="a" style="left:0px;top:960px;width:47px;height:1px;background:#e2e2e2;"></div>
<div class="a" style="left:47px;top:988px;width:1322px;height:1.2px;background:#d6d6d6;"></div>
<div class="a" style="left:0px;top:988px;width:47px;height:1px;background:#e2e2e2;"></div>
<div class="a" style="left:47px;top:1016px;width:1322px;height:1.2px;background:#d6d6d6;"></div>
<div class="a" style="left:0px;top:1016px;width:47px;height:1px;background:#e2e2e2;"></div>
<div class="a" style="left:47px;top:1044px;width:1322px;height:1.2px;background:#d6d6d6;"></div>
<div class="a" style="left:0px;top:1044px;width:47px;height:1px;background:#e2e2e2;"></div>
<div class="a" style="left:47px;top:1072px;width:1322px;height:1.2px;background:#d6d6d6;"></div>
<div class="a" style="left:0px;top:1072px;width:47px;height:1px;background:#e2e2e2;"></div>
<div class="a" style="left:47px;top:1100px;width:1322px;height:1.2px;background:#d6d6d6;"></div>
<div class="a" style="left:0px;top:1100px;width:47px;height:1px;background:#e2e2e2;"></div>
<div class="a" style="left:47px;top:1128px;width:1322px;height:1.2px;background:#d6d6d6;"></div>
<div class="a" style="left:0px;top:1128px;width:47px;height:1px;background:#e2e2e2;"></div>
<div class="a" style="left:47px;top:1156px;width:1322px;height:1.2px;background:#d6d6d6;"></div>
<div class="a" style="left:0px;top:1156px;width:47px;height:1px;background:#e2e2e2;"></div>
<div class="a" style="left:47px;top:1184px;width:1322px;height:1.2px;background:#d6d6d6;"></div>
<div class="a" style="left:0px;top:1184px;width:47px;height:1px;background:#e2e2e2;"></div>
<div class="a" style="left:47px;top:1212px;width:1322px;height:1.2px;background:#d6d6d6;"></div>
<div class="a" style="left:0px;top:1212px;width:47px;height:1px;background:#e2e2e2;"></div>
<div class="a" style="left:47px;top:1240px;width:1322px;height:1.2px;background:#d6d6d6;"></div>
<div class="a" style="left:0px;top:1240px;width:47px;height:1px;background:#e2e2e2;"></div>
<div class="a" style="left:47px;top:1268px;width:1322px;height:1.2px;background:#d6d6d6;"></div>
<div class="a" style="left:0px;top:1268px;width:47px;height:1px;background:#e2e2e2;"></div>
<div class="a" style="left:47px;top:1296px;width:1322px;height:1.2px;background:#d6d6d6;"></div>
<div class="a" style="left:0px;top:1296px;width:47px;height:1px;background:#e2e2e2;"></div>
<div class="a" style="left:47px;top:1324px;width:1322px;height:1.2px;background:#d6d6d6;"></div>
<div class="a" style="left:0px;top:1324px;width:47px;height:1px;background:#e2e2e2;"></div>
<div class="a" style="left:47px;top:1352px;width:1322px;height:1.2px;background:#d6d6d6;"></div>
<div class="a" style="left:0px;top:1352px;width:47px;height:1px;background:#e2e2e2;"></div>
<div class="a" style="left:47px;top:1380px;width:1322px;height:1.2px;background:#d6d6d6;"></div>
<div class="a" style="left:0px;top:1380px;width:47px;height:1px;background:#e2e2e2;"></div>
<div class="a" style="left:192px;top:373px;width:1.2px;height:1007px;background:#d6d6d6;"></div>
<div class="a" style="left:354px;top:373px;width:1.2px;height:1007px;background:#d6d6d6;"></div>
<div class="a" style="left:570px;top:373px;width:1.2px;height:1007px;background:#d6d6d6;"></div>
<div class="a" style="left:688px;top:373px;width:1.2px;height:1007px;background:#d6d6d6;"></div>
<div class="a" style="left:806px;top:373px;width:1.2px;height:1007px;background:#d6d6d6;"></div>
<div class="a" style="left:924px;top:373px;width:1.2px;height:1007px;background:#d6d6d6;"></div>
<div class="a" style="left:1042px;top:373px;width:1.2px;height:1007px;background:#d6d6d6;"></div>
<div class="a" style="left:1160px;top:373px;width:1.2px;height:1007px;background:#d6d6d6;"></div>
<div class="a" style="left:1278px;top:373px;width:1.2px;height:1007px;background:#d6d6d6;"></div>
<div class="a" style="left:1368px;top:373px;width:1.2px;height:1007px;background:#d6d6d6;"></div>
<div class="a" style="left:47px;top:429px;width:523px;height:952px;background:#fff;"></div>
<div class="a" style="left:47px;top:373px;width:307px;height:27px;background:#dde3f0;"></div>
<div class="a" style="left:47px;top:399px;width:307px;height:2px;background:#9fb1d6;"></div>
<div class="a" style="left:47px;top:429px;width:524px;height:27px;background:#dde3f0;"></div>
<div class="a" style="left:47px;top:455px;width:524px;height:2px;background:#9fb1d6;"></div>
<div class="a" style="left:47px;top:483.5px;width:524px;height:1.5px;background:#a9b9da;"></div>
<div class="a" style="left:47px;top:707.5px;width:524px;height:1.5px;background:#a9b9da;"></div>
<div class="a" style="left:47px;top:931.5px;width:524px;height:1.5px;background:#a9b9da;"></div>
<div class="a" style="left:47px;top:1155.5px;width:524px;height:1.5px;background:#a9b9da;"></div>
<div class="a" style="left:47px;top:1379.5px;width:524px;height:1.5px;background:#a9b9da;"></div>
<div class="t" style="left:52.60px;top:377.99px;font-size:18.31px;color:#000;transform:scaleX(1.0196);">Open</div>
<div class="t" style="left:199.60px;top:377.99px;font-size:18.31px;color:#000;">1</div>
<div class="a" style="left:327px;top:374.5px;width:26px;height:25px;background:#f7f8fb;border:1px solid #a9a9a9"></div>
<svg class="a" style="left:327px;top:374px;" width="26" height="26" viewBox="0 0 26 26"><path d="M4 16 H11 L7.5 20 Z" fill="#777"/><path d="M11 5 H23 L18.5 11 V20 H15.5 V11 Z" fill="#6d6d6d"/></svg>
<div class="t" style="left:52.60px;top:433.89px;font-size:18.31px;color:#000;font-weight:bold;transform:scaleX(0.9963);">Row Labels</div>
<div class="a" style="left:165px;top:428.5px;width:26px;height:26px;background:#f7f8fb;border:1px solid #a9a9a9"></div>
<svg class="a" style="left:165px;top:428px;" width="26" height="26" viewBox="0 0 26 26"><path d="M4 16 H11 L7.5 20 Z" fill="#777"/><path d="M17.5 7 V20 M14 16 L17.5 20 L21 16" fill="none" stroke="#777" stroke-width="1.5"/></svg>
<div class="t" style="left:198.00px;top:433.89px;font-size:18.31px;color:#000;font-weight:bold;transform:scaleX(1.0094);">Average of Sales</div>
<div class="t" style="left:360.00px;top:433.89px;font-size:18.31px;color:#000;font-weight:bold;transform:scaleX(1.0322);">Average of Customers</div>
<div class="t" style="left:18.26px;top:377.50px;font-size:18.90px;color:#5c5c5c;">1</div>
<div class="t" style="left:18.26px;top:405.50px;font-size:18.90px;color:#5c5c5c;">2</div>
<div class="t" style="left:18.26px;top:433.50px;font-size:18.90px;color:#5c5c5c;">3</div>
<div class="t" style="left:18.26px;top:461.50px;font-size:18.90px;color:#2a7040;">4</div>
<div class="t" style="left:18.26px;top:489.50px;font-size:18.90px;color:#5c5c5c;">5</div>
<div class="t" style="left:18.26px;top:517.50px;font-size:18.90px;color:#5c5c5c;">6</div>
<div class="t" style="left:18.26px;top:545.50px;font-size:18.90px;color:#5c5c5c;">7</div>
<div class="t" style="left:18.26px;top:573.50px;font-size:18.90px;color:#5c5c5c;">8</div>
<div class="t" style="left:18.26px;top:601.50px;font-size:18.90px;color:#5c5c5c;">9</div>
<div class="t" style="left:12.99px;top:629.50px;font-size:18.90px;color:#5c5c5c;">10</div>
<div class="t" style="left:13.70px;top:657.50px;font-size:18.90px;color:#5c5c5c;">11</div>
<div class="t" style="left:12.99px;top:685.50px;font-size:18.90px;color:#5c5c5c;">12</div>
<div class="t" style="left:12.99px;top:713.50px;font-size:18.90px;color:#5c5c5c;">13</div>
<div class="t" style="left:12.99px;top:741.50px;font-size:18.90px;color:#5c5c5c;">14</div>
<div class="t" style="left:12.99px;top:769.50px;font-size:18.90px;color:#5c5c5c;">15</div>
<div class="t" style="left:12.99px;top:797.50px;font-size:18.90px;color:#5c5c5c;">16</div>
<div class="t" style="left:12.99px;top:825.50px;font-size:18.90px;color:#5c5c5c;">17</div>
<div class="t" style="left:12.99px;top:853.50px;font-size:18.90px;color:#5c5c5c;">18</div>
<div class="t" style="left:12.99px;top:881.50px;font-size:18.90px;color:#5c5c5c;">19</div>
<div class="t" style="left:12.99px;top:909.50px;font-size:18.90px;color:#5c5c5c;">20</div>
<div class="t" style="left:12.99px;top:937.50px;font-size:18.90px;color:#5c5c5c;">21</div>
<div class="t" style="left:12.99px;top:965.50px;font-size:18.90px;color:#5c5c5c;">22</div>
<div class="t" style="left:12.99px;top:993.50px;font-size:18.90px;color:#5c5c5c;">23</div>
<div class="t" style="left:12.99px;top:1021.50px;font-size:18.90px;color:#5c5c5c;">24</div>
<div class="t" style="left:12.99px;top:1049.50px;font-size:18.90px;color:#5c5c5c;">25</div>
<div class="t" style="left:12.99px;top:1077.50px;font-size:18.90px;color:#5c5c5c;">26</div>
<div class="t" style="left:12.99px;top:1105.50px;font-size:18.90px;color:#5c5c5c;">27</div>
<div class="t" style="left:12.99px;top:1133.50px;font-size:18.90px;color:#5c5c5c;">28</div>
<div class="t" style="left:12.99px;top:1161.50px;font-size:18.90px;color:#5c5c5c;">29</div>
<div class="t" style="left:12.99px;top:1189.50px;font-size:18.90px;color:#5c5c5c;">30</div>
<div class="t" style="left:12.99px;top:1217.50px;font-size:18.90px;color:#5c5c5c;">31</div>
<div class="t" style="left:12.99px;top:1245.50px;font-size:18.90px;color:#5c5c5c;">32</div>
<div class="t" style="left:12.99px;top:1273.50px;font-size:18.90px;color:#5c5c5c;">33</div>
<div class="t" style="left:12.99px;top:1301.50px;font-size:18.90px;color:#5c5c5c;">34</div>
<div class="t" style="left:12.99px;top:1329.50px;font-size:18.90px;color:#5c5c5c;">35</div>
<div class="t" style="left:12.99px;top:1357.50px;font-size:18.90px;color:#5c5c5c;">36</div>
<svg class="a" style="left:56px;top:462px;" width="18" height="18" viewBox="0 0 18 18"><rect x="2.5" y="3.5" width="13" height="12" rx="2" fill="#e6e8ee" stroke="#a7abb8" stroke-width="1"/><path d="M6 9.5 H12" stroke="#3c3f4f" stroke-width="1.6"/><path d="M5 2.5 H13" stroke="#c9ccd6" stroke-width="1"/></svg>
<div class="t" style="left:76.50px;top:461.13px;font-size:19.33px;color:#000;font-weight:bold;transform:scaleX(1.1000);">84</div>
<div class="t" style="left:99.28px;top:489.13px;font-size:19.33px;color:#000;transform:scaleX(1.1200);">0</div>
<div class="t" style="left:99.28px;top:517.13px;font-size:19.33px;color:#000;transform:scaleX(1.1200);">1</div>
<div class="t" style="left:99.28px;top:545.13px;font-size:19.33px;color:#000;transform:scaleX(1.1200);">2</div>
<div class="t" style="left:99.28px;top:573.13px;font-size:19.33px;color:#000;transform:scaleX(1.1200);">3</div>
<div class="t" style="left:99.28px;top:601.13px;font-size:19.33px;color:#000;transform:scaleX(1.1200);">4</div>
<div class="t" style="left:99.28px;top:629.13px;font-size:19.33px;color:#000;transform:scaleX(1.1200);">5</div>
<div class="t" style="left:99.28px;top:657.13px;font-size:19.33px;color:#000;transform:scaleX(1.1200);">6</div>
<svg class="a" style="left:56px;top:686px;" width="18" height="18" viewBox="0 0 18 18"><rect x="2.5" y="3.5" width="13" height="12" rx="2" fill="#e6e8ee" stroke="#a7abb8" stroke-width="1"/><path d="M6 9.5 H12" stroke="#3c3f4f" stroke-width="1.6"/><path d="M5 2.5 H13" stroke="#c9ccd6" stroke-width="1"/></svg>
<div class="t" style="left:76.50px;top:685.13px;font-size:19.33px;color:#000;font-weight:bold;transform:scaleX(1.1000);">25</div>
<div class="t" style="left:99.28px;top:713.13px;font-size:19.33px;color:#000;transform:scaleX(1.1200);">0</div>
<div class="t" style="left:99.28px;top:741.13px;font-size:19.33px;color:#000;transform:scaleX(1.1200);">1</div>
<div class="t" style="left:99.28px;top:769.13px;font-size:19.33px;color:#000;transform:scaleX(1.1200);">2</div>
<div class="t" style="left:99.28px;top:797.13px;font-size:19.33px;color:#000;transform:scaleX(1.1200);">3</div>
<div class="t" style="left:99.28px;top:825.13px;font-size:19.33px;color:#000;transform:scaleX(1.1200);">4</div>
<div class="t" style="left:99.28px;top:853.13px;font-size:19.33px;color:#000;transform:scaleX(1.1200);">5</div>
<div class="t" style="left:99.28px;top:881.13px;font-size:19.33px;color:#000;transform:scaleX(1.1200);">6</div>
<svg class="a" style="left:56px;top:910px;" width="18" height="18" viewBox="0 0 18 18"><rect x="2.5" y="3.5" width="13" height="12" rx="2" fill="#e6e8ee" stroke="#a7abb8" stroke-width="1"/><path d="M6 9.5 H12" stroke="#3c3f4f" stroke-width="1.6"/><path d="M5 2.5 H13" stroke="#c9ccd6" stroke-width="1"/></svg>
<div class="t" style="left:76.50px;top:909.13px;font-size:19.33px;color:#000;font-weight:bold;transform:scaleX(1.1000);">57</div>
<div class="t" style="left:99.28px;top:937.13px;font-size:19.33px;color:#000;transform:scaleX(1.1200);">0</div>
<div class="t" style="left:99.28px;top:965.13px;font-size:19.33px;color:#000;transform:scaleX(1.1200);">1</div>
<div class="t" style="left:99.28px;top:993.13px;font-size:19.33px;color:#000;transform:scaleX(1.1200);">2</div>
<div class="t" style="left:99.28px;top:1021.13px;font-size:19.33px;color:#000;transform:scaleX(1.1200);">3</div>
<div class="t" style="left:99.28px;top:1049.13px;font-size:19.33px;color:#000;transform:scaleX(1.1200);">4</div>
<div class="t" style="left:99.28px;top:1077.13px;font-size:19.33px;color:#000;transform:scaleX(1.1200);">5</div>
<div class="t" style="left:99.28px;top:1105.13px;font-size:19.33px;color:#000;transform:scaleX(1.1200);">6</div>
<svg class="a" style="left:56px;top:1134px;" width="18" height="18" viewBox="0 0 18 18"><rect x="2.5" y="3.5" width="13" height="12" rx="2" fill="#e6e8ee" stroke="#a7abb8" stroke-width="1"/><path d="M6 9.5 H12" stroke="#3c3f4f" stroke-width="1.6"/><path d="M5 2.5 H13" stroke="#c9ccd6" stroke-width="1"/></svg>
<div class="t" style="left:76.50px;top:1133.13px;font-size:19.33px;color:#000;font-weight:bold;transform:scaleX(1.1000);">64</div>
<div class="t" style="left:99.28px;top:1161.13px;font-size:19.33px;color:#000;transform:scaleX(1.1200);">0</div>
<div class="t" style="left:99.28px;top:1189.13px;font-size:19.33px;color:#000;transform:scaleX(1.1200);">1</div>
<div class="t" style="left:99.28px;top:1217.13px;font-size:19.33px;color:#000;transform:scaleX(1.1200);">2</div>
<div class="t" style="left:99.28px;top:1245.13px;font-size:19.33px;color:#000;transform:scaleX(1.1200);">3</div>
<div class="t" style="left:99.28px;top:1273.13px;font-size:19.33px;color:#000;transform:scaleX(1.1200);">4</div>
<div class="t" style="left:99.28px;top:1301.13px;font-size:19.33px;color:#000;transform:scaleX(1.1200);">5</div>
<div class="t" style="left:99.28px;top:1329.13px;font-size:19.33px;color:#000;transform:scaleX(1.1200);">6</div>
<svg class="a" style="left:56px;top:1358px;" width="18" height="18" viewBox="0 0 18 18"><rect x="2.5" y="3.5" width="13" height="12" rx="2" fill="#e6e8ee" stroke="#a7abb8" stroke-width="1"/><path d="M6 9.5 H12" stroke="#3c3f4f" stroke-width="1.6"/><path d="M5 2.5 H13" stroke="#c9ccd6" stroke-width="1"/></svg>
<div class="t" style="left:76.50px;top:1357.13px;font-size:19.33px;color:#000;font-weight:bold;transform:scaleX(1.1000);">42</div>
<div class="t" style="left:517.02px;top:461.13px;font-size:19.33px;color:#000;font-weight:bold;transform:scaleX(1.1200);">1155</div>
<div class="t" style="left:517.45px;top:489.13px;font-size:19.33px;color:#000;transform:scaleX(1.1200);">1136</div>
<div class="t" style="left:517.45px;top:517.13px;font-size:19.33px;color:#000;transform:scaleX(1.1200);">1152</div>
<div class="t" style="left:517.45px;top:545.13px;font-size:19.33px;color:#000;transform:scaleX(1.1200);">1125</div>
<div class="t" style="left:517.45px;top:573.13px;font-size:19.33px;color:#000;transform:scaleX(1.1200);">1158</div>
<div class="t" style="left:517.45px;top:601.13px;font-size:19.33px;color:#000;transform:scaleX(1.1200);">1157</div>
<div class="t" style="left:517.45px;top:629.13px;font-size:19.33px;color:#000;transform:scaleX(1.1200);">1131</div>
<div class="t" style="left:517.45px;top:657.13px;font-size:19.33px;color:#000;transform:scaleX(1.1200);">1139</div>
<div class="t" style="left:518.21px;top:685.13px;font-size:19.33px;color:#000;font-weight:bold;transform:scaleX(1.1200);">1117</div>
<div class="t" style="left:517.45px;top:713.13px;font-size:19.33px;color:#000;transform:scaleX(1.1200);">1125</div>
<div class="t" style="left:517.45px;top:741.13px;font-size:19.33px;color:#000;transform:scaleX(1.1200);">1177</div>
<div class="t" style="left:517.45px;top:769.13px;font-size:19.33px;color:#000;transform:scaleX(1.1200);">1155</div>
<div class="t" style="left:517.45px;top:797.13px;font-size:19.33px;color:#000;transform:scaleX(1.1200);">1138</div>
<div class="t" style="left:519.02px;top:825.13px;font-size:19.33px;color:#000;transform:scaleX(1.1200);">1119</div>
<div class="t" style="left:517.45px;top:853.13px;font-size:19.33px;color:#000;transform:scaleX(1.1200);">1191</div>
<div class="t" style="left:517.45px;top:881.13px;font-size:19.33px;color:#000;transform:scaleX(1.1200);">1138</div>
<div class="t" style="left:517.02px;top:909.13px;font-size:19.33px;color:#000;font-weight:bold;transform:scaleX(1.1200);">1122</div>
<div class="t" style="left:517.45px;top:1217.13px;font-size:19.33px;color:#000;transform:scaleX(1.1200);">1125</div>
<div class="t" style="left:517.45px;top:1245.13px;font-size:19.33px;color:#000;transform:scaleX(1.1200);">1179</div>
<div class="t" style="left:519.02px;top:1273.13px;font-size:19.33px;color:#000;transform:scaleX(1.1200);">1119</div>
<div class="t" style="left:517.45px;top:1301.13px;font-size:19.33px;color:#000;transform:scaleX(1.1200);">1152</div>
<div class="t" style="left:517.45px;top:1329.13px;font-size:19.33px;color:#000;transform:scaleX(1.1200);">1103</div>
<div class="t" style="left:225.00px;top:1357.13px;font-size:19.33px;color:#000;font-weight:bold;transform:scaleX(1.0984);">10178,13607</div>
<div class="t" style="left:452.40px;top:1357.13px;font-size:19.33px;color:#000;font-weight:bold;transform:scaleX(1.1142);">1100,04878</div>
<div class="a" style="left:44px;top:454.5px;width:152px;height:33px;border:3.2px solid #2c6e40"></div>
<div class="a" style="left:44px;top:454px;width:152px;height:3.5px;background:#2c6e40;"></div>
<div class="a" style="left:1369px;top:333px;width:605px;height:1100px;background:#ebebeb;"></div>
<div class="a" style="left:1368px;top:333px;width:2px;height:1100px;background:#c9c9c9;"></div>
<div class="t" style="left:1406.70px;top:346.16px;font-size:30.52px;color:#1e1e1e;transform:scaleX(1.0110);-webkit-text-stroke:0.5px #1e1e1e;">PivotTable Fields</div>
<div class="a" style="left:1926px;top:347px;width:28px;height:28px;border-radius:50%;background:#6b6b6b"></div>
<svg class="a" style="left:1926px;top:347px;" width="28" height="28" viewBox="0 0 28 28"><path d="M9 9 L19 19 M19 9 L9 19" stroke="#fff" stroke-width="2.6" stroke-linecap="round"/></svg>
<div class="t" style="left:1398.90px;top:435.51px;font-size:27.03px;color:#b3b3b3;font-weight:bold;transform:scaleX(0.9511);">FIELD NAME</div>
<div class="a" style="left:1680px;top:432px;width:278px;height:33px;border-radius:8px;background:#fff;box-shadow:0 0 0 0.5px #d0d0d0, 0 1px 1.5px rgba(0,0,0,.12)"></div>
<svg class="a" style="left:1690px;top:434px;" width="30" height="30" viewBox="0 0 30 30"><circle cx="12.5" cy="11.5" r="8.5" fill="none" stroke="#222" stroke-width="2.2"/><path d="M18.5 17.5 L25 24" stroke="#222" stroke-width="2.6" stroke-linecap="round"/></svg>
<div class="t" style="left:1733.00px;top:436.92px;font-size:22.53px;color:#b4b4b4;transform:scaleX(1.0290);">Search fields</div>
<div class="a" style="left:1382px;top:502px;width:576px;height:158px;background:#fff;overflow:hidden">
<div class="a" style="left:4.4px;top:8.4px;width:27px;height:27px;border-radius:6px;background:linear-gradient(#4c97f8,#2f7cf0)"></div>
<svg class="a" style="left:4px;top:8px;" width="28" height="28" viewBox="0 0 28 28"><path d="M7 14.5 L12 19.5 L21 8" fill="none" stroke="#fff" stroke-width="3" stroke-linecap="round" stroke-linejoin="round"/></svg>
<div class="t" style="left:44.90px;top:9.82px;font-size:27.62px;color:#333;transform:scaleX(0.9560);">Store</div>
<div class="a" style="left:4.4px;top:52.4px;width:27px;height:27px;border-radius:6px;background:linear-gradient(#4c97f8,#2f7cf0)"></div>
<svg class="a" style="left:4px;top:52px;" width="28" height="28" viewBox="0 0 28 28"><path d="M7 14.5 L12 19.5 L21 8" fill="none" stroke="#fff" stroke-width="3" stroke-linecap="round" stroke-linejoin="round"/></svg>
<div class="t" style="left:44.90px;top:53.82px;font-size:27.62px;color:#333;transform:scaleX(0.9506);">DayOfWeek</div>
<div class="a" style="left:4.4px;top:96.4px;width:27px;height:27px;border-radius:6px;background:#e6e6e6;box-shadow:inset 0 0 0 0.5px #dadada"></div>
<div class="t" style="left:44.90px;top:97.82px;font-size:27.62px;color:#333;transform:scaleX(0.9445);">Date</div>
<div class="a" style="left:4.4px;top:140.4px;width:27px;height:27px;border-radius:6px;background:linear-gradient(#4c97f8,#2f7cf0)"></div>
<svg class="a" style="left:4px;top:140px;" width="28" height="28" viewBox="0 0 28 28"><path d="M7 14.5 L12 19.5 L21 8" fill="none" stroke="#fff" stroke-width="3" stroke-linecap="round" stroke-linejoin="round"/></svg>
<div class="t" style="left:44.90px;top:141.82px;font-size:27.62px;color:#333;transform:scaleX(0.9130);">Sales</div>
</div>
<div class="a" style="left:1664px;top:679px;width:12px;height:12px;border-radius:50%;background:#d5d5d5"></div>
<svg class="a" style="left:1388px;top:712px;" width="32" height="32" viewBox="0 0 32 32"><path d="M2 6 C2 2 28 2 28 6 L18 18 V28 A3 3 0 0 1 12 28 V18 Z" fill="#5b5b5b"/><ellipse cx="15" cy="6.5" rx="10" ry="2.6" fill="#d8d8d8"/></svg>
<div class="t" style="left:1438.40px;top:716.21px;font-size:27.03px;color:#222;transform:scaleX(0.9850);">Filters</div>
<svg class="a" style="left:1694px;top:717px;" width="30" height="24" viewBox="0 0 30 24"><rect x="1.5" y="1.5" width="5" height="20" fill="#5b5b5b"/><rect x="11" y="1.5" width="5" height="20" fill="#5b5b5b"/><rect x="20.5" y="1.5" width="5" height="20" fill="#5b5b5b"/></svg>
<div class="t" style="left:1745.00px;top:716.21px;font-size:27.03px;color:#222;transform:scaleX(0.9751);">Columns</div>
<svg class="a" style="left:1389px;top:1046px;" width="28" height="30" viewBox="0 0 28 30"><rect x="2" y="2" width="23" height="5" fill="#5b5b5b"/><rect x="2" y="11" width="23" height="5" fill="#5b5b5b"/><rect x="2" y="20" width="23" height="5" fill="#5b5b5b"/></svg>
<div class="t" style="left:1439.30px;top:1050.11px;font-size:27.03px;color:#222;transform:scaleX(0.9203);">Rows</div>
<svg class="a" style="left:1694px;top:1046px;" width="30" height="32" viewBox="0 0 30 32"><path d="M2 2 H26 L27 8 H25 C24 6 23 5.5 20 5.5 H9 L17 15 L8 25.5 H20 C23 25.5 24 24.5 25.5 22 H27 L25.5 29 H2 L12 15.5 Z" fill="#5b5b5b"/></svg>
<div class="t" style="left:1742.60px;top:1050.11px;font-size:27.03px;color:#222;transform:scaleX(0.9636);">Values</div>
<div class="a" style="left:1382px;top:760px;width:272px;height:254px;background:#fff;box-shadow:0 0 1px rgba(0,0,0,.15)"></div>
<div class="a" style="left:1688px;top:760px;width:270px;height:254px;background:#fff;box-shadow:0 0 1px rgba(0,0,0,.15)"></div>
<div class="a" style="left:1382px;top:1098px;width:272px;height:254px;background:#fff;box-shadow:0 0 1px rgba(0,0,0,.15)"></div>
<div class="a" style="left:1686px;top:1098px;width:272px;height:254px;background:#fff;box-shadow:0 0 1px rgba(0,0,0,.15)"></div>
<div class="a" style="left:1396.5px;top:772.5px;width:5px;height:5px;border-radius:50%;background:#b3b3b3"></div><div class="a" style="left:1396.5px;top:784.5px;width:5px;height:5px;border-radius:50%;background:#b3b3b3"></div>
<div class="t" style="left:1412.90px;top:771.31px;font-size:23.26px;color:#3c3c3c;transform:scaleX(0.9558);">Open</div>
<div class="a" style="left:1625.8px;top:769.8px;width:24px;height:24px;border-radius:50%;background:#b9b9b9"></div>
<div class="t" style="left:1633.8px;top:771.3px;font-family:'Liberation Serif';font-style:italic;font-weight:bold;font-size:21px;color:#fff">i</div>
<div class="a" style="left:1702.1px;top:772.5px;width:5px;height:5px;border-radius:50%;background:#b3b3b3"></div><div class="a" style="left:1702.1px;top:784.5px;width:5px;height:5px;border-radius:50%;background:#b3b3b3"></div>
<div class="t" style="left:1719.30px;top:771.31px;font-size:23.26px;color:#3c3c3c;transform:scaleX(0.9616);">Values</div>
<div class="a" style="left:1396.5px;top:1110.5px;width:5px;height:5px;border-radius:50%;background:#b3b3b3"></div><div class="a" style="left:1396.5px;top:1122.5px;width:5px;height:5px;border-radius:50%;background:#b3b3b3"></div>
<div class="t" style="left:1412.90px;top:1109.31px;font-size:23.26px;color:#3c3c3c;transform:scaleX(0.9733);">Store</div>
<div class="a" style="left:1625.8px;top:1108.2px;width:24px;height:24px;border-radius:50%;background:#b9b9b9"></div>
<div class="t" style="left:1633.8px;top:1109.7px;font-family:'Liberation Serif';font-style:italic;font-weight:bold;font-size:21px;color:#fff">i</div>
<div class="a" style="left:1396.5px;top:1154.5px;width:5px;height:5px;border-radius:50%;background:#b3b3b3"></div><div class="a" style="left:1396.5px;top:1166.5px;width:5px;height:5px;border-radius:50%;background:#b3b3b3"></div>
<div class="t" style="left:1412.90px;top:1153.81px;font-size:23.26px;color:#3c3c3c;transform:scaleX(0.9688);">DayOfWeek</div>
<div class="a" style="left:1625.8px;top:1152.4px;width:24px;height:24px;border-radius:50%;background:#b9b9b9"></div>
<div class="t" style="left:1633.8px;top:1153.9px;font-family:'Liberation Serif';font-style:italic;font-weight:bold;font-size:21px;color:#fff">i</div>
<div class="a" style="left:1699.5px;top:1110.5px;width:5px;height:5px;border-radius:50%;background:#b3b3b3"></div><div class="a" style="left:1699.5px;top:1122.5px;width:5px;height:5px;border-radius:50%;background:#b3b3b3"></div>
<div class="t" style="left:1717.00px;top:1109.31px;font-size:23.26px;color:#3c3c3c;transform:scaleX(0.9757);">Average of Sales</div>
<div class="a" style="left:1929.6px;top:1108.2px;width:24px;height:24px;border-radius:50%;background:#b9b9b9"></div>
<div class="t" style="left:1937.6px;top:1109.7px;font-family:'Liberation Serif';font-style:italic;font-weight:bold;font-size:21px;color:#fff">i</div>
<div class="a" style="left:1699.5px;top:1154.5px;width:5px;height:5px;border-radius:50%;background:#b3b3b3"></div><div class="a" style="left:1699.5px;top:1166.5px;width:5px;height:5px;border-radius:50%;background:#b3b3b3"></div>
<div class="t" style="left:1717.00px;top:1153.81px;font-size:23.26px;color:#3c3c3c;transform:scaleX(0.9866);">Average of Custo...</div>
<div class="a" style="left:1929.6px;top:1152.4px;width:24px;height:24px;border-radius:50%;background:#b9b9b9"></div>
<div class="t" style="left:1937.6px;top:1153.9px;font-family:'Liberation Serif';font-style:italic;font-weight:bold;font-size:21px;color:#fff">i</div>
<div class="t" style="left:1512.40px;top:1376.08px;font-size:24.71px;color:#b9b9b9;transform:scaleX(1.0945);-webkit-text-stroke:0;">Drag fields between areas</div>
<div class="a" style="left:0px;top:1380px;width:1369px;height:53px;background:#efefef;"></div>
<div class="a" style="left:0px;top:1380px;width:1369px;height:1px;background:#dcdcdc;"></div>
<div class="a" style="left:0px;top:1432px;width:1974px;height:1px;background:#bdbdbd;"></div>
<svg class="a" style="left:28px;top:1393px;" width="22" height="26" viewBox="0 0 22 26"><path d="M18 3 V23 L4 13 Z" fill="#bdbdbd"/></svg>
<svg class="a" style="left:74px;top:1393px;" width="22" height="26" viewBox="0 0 22 26"><path d="M4 3 V23 L18 13 Z" fill="#bdbdbd"/></svg>
<div class="a" style="left:123px;top:1379px;width:158px;height:45px;background:#fff;border-radius:0 0 5px 5px;box-shadow:0 1px 2px rgba(0,0,0,.25)"></div>
<div class="t" style="left:162.50px;top:1390.46px;font-size:25.44px;color:#3a7a4f;font-weight:bold;transform:scaleX(0.9229);">Sheet1</div>
<div class="t" style="left:315.70px;top:1390.46px;font-size:25.44px;color:#555;transform:scaleX(0.9640);">raw_data</div>
<div class="a" style="left:450px;top:1386px;width:1px;height:37px;background:#d2d2d2;"></div>
<div class="t" style="left:487.00px;top:1390.46px;font-size:25.44px;color:#555;transform:scaleX(0.9685);">cleaned_data</div>
<div class="a" style="left:670px;top:1386px;width:1px;height:37px;background:#d2d2d2;"></div>
<svg class="a" style="left:698px;top:1393px;" width="24" height="24" viewBox="0 0 24 24"><path d="M12 2 V22 M2 12 H22" stroke="#444" stroke-width="2.8"/></svg>
<div class="a" style="left:746px;top:1386px;width:1px;height:37px;background:#d2d2d2;"></div>
<div class="a" style="left:0px;top:1433px;width:1974px;height:49px;background:linear-gradient(#e6e6e6,#dedede);"></div>
<svg class="a" style="left:48px;top:1440px;" width="34" height="30" viewBox="0 0 34 30"><circle cx="7.5" cy="6" r="5" fill="#6a6a6a"/><path d="M13 4 H27 A4 4 0 0 1 31 8 V9 H27 V23 A5 5 0 0 1 17 23 V21 H4 V23 A5 5 0 0 0 9 28 H22" fill="none" stroke="#6a6a6a" stroke-width="2.2"/><path d="M9 11 V21" stroke="#6a6a6a" stroke-width="2"/><path d="M4 21 H17 V23 A5 5 0 0 0 22 28 H9 A5 5 0 0 1 4 23 Z" fill="#6a6a6a"/></svg>
<div class="a" style="left:1332px;top:1433px;width:74px;height:46px;background:#b6b6b6;"></div>
<svg class="a" style="left:1354px;top:1441px;" width="30" height="30" viewBox="0 0 30 30"><rect x="1.5" y="1.5" width="27" height="27" fill="#fff" stroke="#fff"/><path d="M1.5 1.5 H28.5 V28.5 H1.5 Z M10.5 1.5 V28.5 M19.5 1.5 V28.5 M1.5 10.5 H28.5 M1.5 19.5 H28.5" fill="none" stroke="#6c6c6c" stroke-width="1.6"/></svg>
<svg class="a" style="left:1425px;top:1441px;" width="32" height="28" viewBox="0 0 32 28"><rect x="2" y="2" width="27" height="24" fill="none" stroke="#6c6c6c" stroke-width="2.2"/><path d="M9 8 H22 M9 13 H22 M9 18 H22" stroke="#6c6c6c" stroke-width="2"/><rect x="7" y="6" width="17" height="16" fill="none" stroke="#6c6c6c" stroke-width="1.6"/></svg>
<svg class="a" style="left:1496px;top:1441px;" width="32" height="28" viewBox="0 0 32 28"><rect x="2" y="2" width="27" height="24" fill="none" stroke="#6c6c6c" stroke-width="2.2"/><path d="M9 2 V14 H16 V2 M2 14 H9" fill="none" stroke="#6c6c6c" stroke-width="2"/></svg>
<div class="a" style="left:1563.7px;top:1453px;width:16.5px;height:4px;background:#6c6c6c;"></div>
<div class="a" style="left:1595px;top:1452px;width:197px;height:6.5px;background:#a6a6a6;border-radius:3.5px;"></div>
<div class="a" style="left:1672.5px;top:1444px;width:22px;height:22px;border-radius:50%;background:#fff;box-shadow:0 0.5px 2px rgba(0,0,0,.35)"></div>
<svg class="a" style="left:1806px;top:1445px;" width="20" height="20" viewBox="0 0 20 20"><path d="M10 2 V18 M2 10 H18" stroke="#6c6c6c" stroke-width="3.6"/></svg>
<div class="t" style="left:1864.50px;top:1443.57px;font-size:24.13px;color:#444;transform:scaleX(1.0493);-webkit-text-stroke:0.1px #444;">90%</div>
<div class="a" style="left:130px;top:458px;width:416px;height:900px;border-radius:10px;background:#e6e3e8;box-shadow:0 0 0 1px rgba(0,0,0,.12), 0 8px 28px rgba(0,0,0,.22)"></div>
<div class="t" style="left:178.80px;top:476.62px;font-size:27.62px;color:#1e1e22;transform:scaleX(0.9429);">Copy</div>
<svg class="a" style="left:474px;top:481px;" width="20" height="20" viewBox="0 0 20 20"><path d="M7 7 H13 V13 H7 Z M7 7 V4.5 A2.6 2.6 0 1 0 4.5 7 H7 M13 7 V4.5 A2.6 2.6 0 1 1 15.5 7 H13 M13 13 V15.5 A2.6 2.6 0 1 0 15.5 13 H13 M7 13 V15.5 A2.6 2.6 0 1 1 4.5 13 H7" fill="none" stroke="#a9a8ad" stroke-width="1.7"/></svg>
<div class="t" style="left:497.05px;top:476.62px;font-size:27.62px;color:#a9a8ad;">C</div>
<div class="t" style="left:178.80px;top:520.62px;font-size:27.62px;color:#1e1e22;transform:scaleX(0.9615);">Format Cells...</div>
<svg class="a" style="left:474px;top:525px;" width="20" height="20" viewBox="0 0 20 20"><path d="M7 7 H13 V13 H7 Z M7 7 V4.5 A2.6 2.6 0 1 0 4.5 7 H7 M13 7 V4.5 A2.6 2.6 0 1 1 15.5 7 H13 M13 13 V15.5 A2.6 2.6 0 1 0 15.5 13 H13 M7 13 V15.5 A2.6 2.6 0 1 1 4.5 13 H7" fill="none" stroke="#a9a8ad" stroke-width="1.7"/></svg>
<div class="t" style="left:501.67px;top:520.62px;font-size:27.62px;color:#a9a8ad;">1</div>
<div class="a" style="left:158px;top:566.5px;width:360px;height:1.2px;background:#cfcdd2;"></div>
<div class="t" style="left:178.80px;top:586.62px;font-size:27.62px;color:#1e1e22;transform:scaleX(0.9367);">Refresh</div>
<div class="a" style="left:158px;top:632.5px;width:360px;height:1.2px;background:#cfcdd2;"></div>
<div class="t" style="left:178.80px;top:652.62px;font-size:27.62px;color:#1e1e22;transform:scaleX(0.9768);">Sort</div>
<svg class="a" style="left:502px;top:657px;" width="14" height="18" viewBox="0 0 14 18"><path d="M3 2 L10.5 9 L3 16" fill="none" stroke="#1e1e22" stroke-width="3" stroke-linecap="round" stroke-linejoin="round"/></svg>
<div class="t" style="left:178.80px;top:696.62px;font-size:27.62px;color:#1e1e22;transform:scaleX(0.9645);">Filter</div>
<svg class="a" style="left:502px;top:701px;" width="14" height="18" viewBox="0 0 14 18"><path d="M3 2 L10.5 9 L3 16" fill="none" stroke="#1e1e22" stroke-width="3" stroke-linecap="round" stroke-linejoin="round"/></svg>
<div class="a" style="left:158px;top:742.5px;width:360px;height:1.2px;background:#cfcdd2;"></div>
<div class="t" style="left:178.80px;top:762.62px;font-size:27.62px;color:#1e1e22;transform:scaleX(0.9691);">Select</div>
<svg class="a" style="left:502px;top:767px;" width="14" height="18" viewBox="0 0 14 18"><path d="M3 2 L10.5 9 L3 16" fill="none" stroke="#1e1e22" stroke-width="3" stroke-linecap="round" stroke-linejoin="round"/></svg>
<div class="t" style="left:178.80px;top:806.62px;font-size:27.62px;color:#1e1e22;transform:scaleX(0.9506);">Formulas</div>
<svg class="a" style="left:502px;top:811px;" width="14" height="18" viewBox="0 0 14 18"><path d="M3 2 L10.5 9 L3 16" fill="none" stroke="#1e1e22" stroke-width="3" stroke-linecap="round" stroke-linejoin="round"/></svg>
<div class="a" style="left:158px;top:852.5px;width:360px;height:1.2px;background:#cfcdd2;"></div>
<svg class="a" style="left:147px;top:876px;" width="22" height="20" viewBox="0 0 22 20"><path d="M3 10 L8.5 16.5 L18.5 2.5" fill="none" stroke="#1e1e22" stroke-width="3.6" stroke-linecap="round" stroke-linejoin="round"/></svg>
<div class="t" style="left:178.80px;top:872.62px;font-size:27.62px;color:#1e1e22;">Subtotal "Store"</div>
<div class="a" style="left:158px;top:918.5px;width:360px;height:1.2px;background:#cfcdd2;"></div>
<div class="a" style="left:140px;top:930px;width:394px;height:44px;background:#cfcdd3;border-radius:6px;"></div>
<div class="t" style="left:178.80px;top:938.62px;font-size:27.62px;color:#1e1e22;transform:scaleX(0.9580);">Expand/Collapse</div>
<svg class="a" style="left:502px;top:943px;" width="14" height="18" viewBox="0 0 14 18"><path d="M3 2 L10.5 9 L3 16" fill="none" stroke="#1e1e22" stroke-width="3" stroke-linecap="round" stroke-linejoin="round"/></svg>
<div class="a" style="left:158px;top:984.5px;width:360px;height:1.2px;background:#cfcdd2;"></div>
<div class="t" style="left:178.80px;top:1004.62px;font-size:27.62px;color:#1e1e22;transform:scaleX(0.9402);">Group...</div>
<div class="t" style="left:178.80px;top:1048.62px;font-size:27.62px;color:#1e1e22;transform:scaleX(0.9692);">Ungroup...</div>
<div class="a" style="left:158px;top:1094.5px;width:360px;height:1.2px;background:#cfcdd2;"></div>
<div class="t" style="left:178.80px;top:1114.62px;font-size:27.62px;color:#1e1e22;transform:scaleX(0.9404);">Move</div>
<svg class="a" style="left:502px;top:1119px;" width="14" height="18" viewBox="0 0 14 18"><path d="M3 2 L10.5 9 L3 16" fill="none" stroke="#1e1e22" stroke-width="3" stroke-linecap="round" stroke-linejoin="round"/></svg>
<div class="t" style="left:178.80px;top:1158.62px;font-size:27.62px;color:#1e1e22;transform:scaleX(0.9646);">Remove "Store"</div>
<div class="a" style="left:158px;top:1204.5px;width:360px;height:1.2px;background:#cfcdd2;"></div>
<div class="t" style="left:178.80px;top:1224.62px;font-size:27.62px;color:#1e1e22;transform:scaleX(0.9751);">Field Settings...</div>
<div class="t" style="left:178.80px;top:1268.62px;font-size:27.62px;color:#1e1e22;transform:scaleX(0.9735);">PivotTable Options...</div>
<svg class="a" style="left:147px;top:1316px;" width="22" height="20" viewBox="0 0 22 20"><path d="M3 10 L8.5 16.5 L18.5 2.5" fill="none" stroke="#1e1e22" stroke-width="3.6" stroke-linecap="round" stroke-linejoin="round"/></svg>
<div class="t" style="left:178.80px;top:1312.62px;font-size:27.62px;color:#1e1e22;transform:scaleX(0.9706);">Hide Field List</div>
<div class="a" style="left:536px;top:920px;width:360px;height:306px;border-radius:10px;background:#e8e6ea;box-shadow:0 0 0 1px rgba(0,0,0,.12), 0 8px 28px rgba(0,0,0,.22)"></div>
<div class="t" style="left:564.80px;top:938.62px;font-size:27.62px;color:#1e1e22;transform:scaleX(0.9243);">Expand</div>
<div class="t" style="left:564.80px;top:982.62px;font-size:27.62px;color:#1e1e22;transform:scaleX(0.9535);">Collapse</div>
<div class="t" style="left:564.80px;top:1026.62px;font-size:27.62px;color:#1e1e22;transform:scaleX(0.9493);">Expand Entire Field</div>
<div class="a" style="left:546px;top:1062px;width:340px;height:44px;background:#629ef3;border-radius:6px;"></div>
<div class="t" style="left:564.80px;top:1070.62px;font-size:27.62px;color:#fff;transform:scaleX(0.9618);">Collapse Entire Field</div>
<div class="a" style="left:564px;top:1116.5px;width:305px;height:1.2px;background:#cfcdd2;"></div>
<div class="t" style="left:564.80px;top:1136.62px;font-size:27.62px;color:#1e1e22;transform:scaleX(0.9911);">Collapse to “Store”</div>
<div class="t" style="left:564.80px;top:1180.62px;font-size:27.62px;color:#1e1e22;transform:scaleX(0.9754);">Expand to "DayOfWeek"</div>
</div>
</body></html>
